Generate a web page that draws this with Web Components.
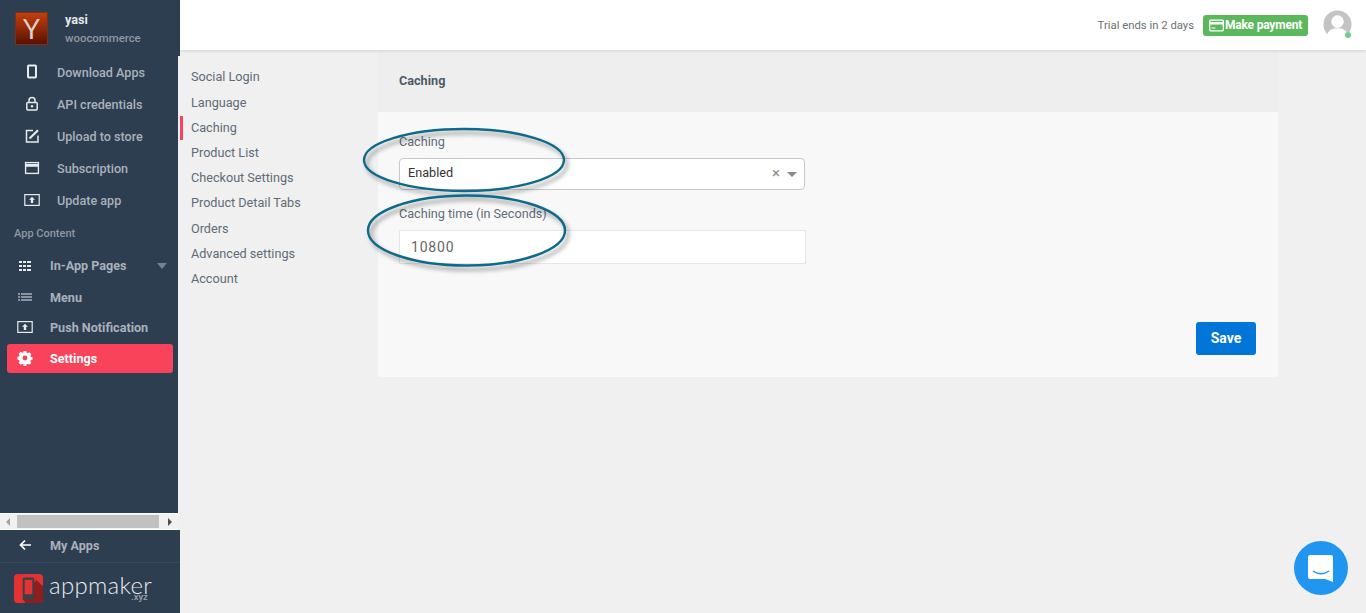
<!DOCTYPE html>
<html><head><meta charset="utf-8"><style>
html,body{margin:0;height:100%;overflow:hidden;background:#f0f0f0}
body{font-family:Roboto,"Liberation Sans",sans-serif}
</style></head><body>
<app-shell>
  <side-bar slot="side"></side-bar>
  <top-bar slot="top"></top-bar>
  <sub-nav slot="nav"></sub-nav>
  <cache-panel slot="main"></cache-panel>
</app-shell>
<chat-bubble></chat-bubble>
<script>
const def=(n,html)=>customElements.define(n,class extends HTMLElement{constructor(){super();this.attachShadow({mode:'open'}).innerHTML=html}});
def('app-shell',`<style>:host{display:grid;grid-template-columns:180px 1fr;grid-template-rows:50px 1fr;height:613px;width:1366px}
.s{grid-row:1/3}.b{display:flex;min-height:0}</style>
<div class="s"><slot name="side"></slot></div><slot name="top"></slot><div class="b"><slot name="nav"></slot><slot name="main"></slot></div>`);
const ic={
phone:'<rect x="5" y="2.500" width="8" height="12" rx=".8" fill="none" stroke="#e8eaec" stroke-width="2"/>',
lock:'<path d="M6 7.500V5.500a3 3 0 016 0v2" fill="none" stroke="#e8eaec" stroke-width="1.500"/><rect x="3.800" y="7.500" width="10.400" height="7.500" rx="1" fill="none" stroke="#e8eaec" stroke-width="1.500"/><circle cx="9" cy="11.200" r="1.200" fill="#e8eaec"/>',
edit:'<path d="M10 3.500H3.500v11.500h11.500V8.500" fill="none" stroke="#e8eaec" stroke-width="1.500"/><path d="M6.500 11.500L15 3.200" stroke="#e8eaec" stroke-width="2.200"/>',
card:'<rect x="2.600" y="3.600" width="12.800" height="10.800" fill="none" stroke="#e8eaec" stroke-width="1.400"/><rect x="3" y="5" width="12" height="2.800" fill="#e8eaec"/>',
up:'<rect x="1.800" y="3.600" width="14.400" height="10.800" fill="none" stroke="#e8eaec" stroke-width="1.200"/><path d="M9 5.800l3 3h-1.800V12H7.800V8.800H6z" fill="#e8eaec"/>',
grid:'<g fill="#e8eaec"><rect x="3" y="4" width="3" height="2"/><rect x="7" y="4" width="3" height="2"/><rect x="11" y="4" width="4" height="2"/><rect x="3" y="8" width="3" height="2"/><rect x="7" y="8" width="3" height="2"/><rect x="11" y="8" width="4" height="2"/><rect x="3" y="12" width="3" height="2"/><rect x="7" y="12" width="3" height="2"/><rect x="11" y="12" width="4" height="2"/></g>',
menu:'<path d="M2 6h2M5 6h11M2 9h2M5 9h11M2 12h2M5 12h11" stroke="#e8eaec" stroke-width="1.200" fill="none"/>',
gear:'<path fill="#fff" d="M7.600 2h2.800l.3 1.700 1.200.5 1.500-1 2 2-1 1.500.5 1.200 1.700.3v2.600l-1.700.3-.5 1.200 1 1.500-2 2-1.500-1-1.200.5-.3 1.700H7.600l-.3-1.700-1.200-.5-1.500 1-2-2 1-1.500-.5-1.200-1.700-.3V7.700l1.700-.3.500-1.200-1-1.500 2-2 1.500 1 1.200-.5z"/><circle cx="9" cy="9" r="2.400" fill="#f9435b"/>',
back:'<path d="M15 9H4M9 4.500L4.500 9l4.500 4.500" fill="none" stroke="#fff" stroke-width="1.700"/>'};
const svg=k=>`<svg width="18" height="18" viewBox="0 0 18 18">${ic[k]}</svg>`;
def('side-bar',`<style>
:host{display:flex;flex-direction:column;width:180px;height:613px;color:#a9b1ba;font-size:12.600px;font-weight:500}
.head{display:flex;height:56px;box-sizing:border-box;padding:12px 0 0 15px;gap:17px;background:#2d3e50}
.logo{width:33px;height:33px;background:linear-gradient(#c8400e,#561000);color:#dccfc6;font:400 27px/33px Lato,sans-serif;text-align:center;box-shadow:0 0 0 1px #7a3020 inset}
.n{font-weight:700;color:#e6e8ea;line-height:15px}.w{font-size:11.400px;color:#8f98a3;margin-top:4px;line-height:15px}
.scroll{flex:1;width:178px;display:flex;flex-direction:column;min-height:0;background:#2d3e50}
.r{display:flex;align-items:center;height:32px;padding-left:23px;gap:16px}
.r svg{flex:none}
.lab{font-size:11px;height:34px;line-height:36px;padding-left:14px;color:#8f98a3;font-weight:500}
.c{display:flex;align-items:center;height:30px;padding-left:16px;gap:16px;font-weight:700;position:relative}
.c.first{height:31px}.c.m{margin-top:1px}
.c.on{background:#f9435b;color:#fff;border-radius:3px;margin:2px 5px 0 7px;padding:0 0 1px 9px;height:29px;box-sizing:border-box}
.tri{position:absolute;left:157px;top:13px;border:5px solid transparent;border-top:6px solid #778391;border-bottom:0}
.sp{flex:1}
.bar{height:17px;background:#f1f1f1;display:flex;align-items:center;justify-content:space-between;padding:0 6px;box-sizing:border-box;position:relative;width:178px;border-top:1px solid #fff;border-bottom:1px solid #fff}
.bar i{width:0;height:0;border:4px solid transparent}
.bar .l{border-right:4px solid #a3a3a3;border-left:0}.bar .rr{border-left:4px solid #505050;border-right:0}
.thumb{position:absolute;left:17px;right:19px;top:1px;bottom:1px;background:#c1c1c1}
.my{display:flex;align-items:center;height:33px;padding:0 0 2px 16px;box-sizing:border-box;gap:16px;font-weight:700;border-bottom:1px solid #37475a;background:#2d3e50}
.brand{height:50px;display:flex;padding:11px 0 0 14px;gap:6px;box-sizing:border-box;position:relative;background:#2d3e50}
.word{font:300 24px/20px Lato,Roboto,sans-serif;color:#e8eaec;letter-spacing:.3px;height:20px;margin-top:1px}
.xyz{position:absolute;left:131px;top:29px;font-size:9.500px;line-height:10px;color:#9aa3ac}
</style>
<div class="head"><div class="logo">Y</div><div><div class="n">yasi</div><div class="w">woocommerce</div></div></div>
<div class="scroll">
<div class="r">${svg('phone')}<span>Download Apps</span></div>
<div class="r">${svg('lock')}<span>API credentials</span></div>
<div class="r">${svg('edit')}<span>Upload to store</span></div>
<div class="r">${svg('card')}<span>Subscription</span></div>
<div class="r">${svg('up')}<span>Update app</span></div>
<div class="lab">App Content</div>
<div class="c first">${svg('grid')}<span>In-App Pages</span><i class="tri"></i></div>
<div class="c m">${svg('menu')}<span>Menu</span></div>
<div class="c">${svg('up')}<span>Push Notification</span></div>
<div class="c on">${svg('gear')}<span>Settings</span></div>
<div class="sp"></div>
<div class="bar"><i class="l"></i><div class="thumb"></div><i class="rr"></i></div>
</div>
<div class="my">${svg('back')}<span>My Apps</span></div>
<div class="brand"><svg width="29" height="29" viewBox="0 0 30 30"><rect width="30" height="30" rx="4" fill="#e23232"/><path d="M23 6l7 7v13a4 4 0 01-4 4H12L9 26z" fill="#8e1f1f"/><rect x="9" y="3.500" width="12" height="23" rx="2" fill="#3a3f4a"/><rect x="11" y="6" width="8" height="15" fill="#e23232"/></svg><span class="word">appmaker</span><span class="xyz">.xyz</span></div>`);
def('top-bar',`<style>:host{display:flex;align-items:center;justify-content:flex-end;height:50px;background:#fff;box-shadow:0 1px 3px rgba(0,0,0,.12);position:relative;z-index:2;padding-right:14px;box-sizing:border-box;color:#6c6f75;font-size:11.300px}
.t{margin-right:9px}
.b{display:inline-flex;align-items:center;gap:1px;height:21px;background:#5cb85c;border-radius:3px;color:#fff;font-weight:700;font-size:12px;letter-spacing:-.2px;padding:0 0 0 6px;margin-right:15px;box-sizing:border-box;width:105px;white-space:nowrap}
.av{position:relative;width:29px;height:29px;margin-bottom:2px}
.d{position:absolute;right:1px;bottom:1px;width:6px;height:6px;border-radius:50%;background:#6fce8f}
</style><span class="t">Trial ends in 2 days</span>
<span class="b"><svg width="15" height="15" viewBox="0 0 15 15"><rect x=".7" y="2.200" width="13.600" height="10.600" rx="1" fill="none" stroke="#fff" stroke-width="1.300"/><rect x="1" y="4" width="13" height="2.500" fill="#fff"/><rect x="2.500" y="9.500" width="4" height="1" fill="#fff"/></svg>Make payment</span>
<span class="av"><svg width="29" height="29" viewBox="0 0 30 30"><circle cx="15" cy="15" r="14.500" fill="#c3c3c3"/><circle cx="15" cy="12" r="6.500" fill="#fff"/><path d="M4 26c2-6 7-7 11-7s9 1 11 7a14.500 14.500 0 01-22 0z" fill="#fff"/></svg><i class="d"></i></span>`);
def('sub-nav',`<style>:host{display:flex;flex-direction:column;width:198px;flex:none;padding-top:14.400px;box-sizing:border-box;color:#5f6b77;font-size:12.650px}
div{height:25.250px;line-height:25px;padding-left:11px;box-sizing:border-box}
.on{border-left:3px solid #f9435b;padding-left:8px;height:24px;line-height:24px;margin:1px 0 0}
</style><div>Social Login</div><div>Language</div><div class="on">Caching</div><div>Product List</div><div>Checkout Settings</div><div>Product Detail Tabs</div><div>Orders</div><div>Advanced settings</div><div>Account</div>`);
def('cache-panel',`<style>:host{display:block;width:900px;flex:none;position:relative;color:#5f6b77;font-size:12.650px}
.h{height:62px;background:#eeeeee;padding:22px 0 0 21px;box-sizing:border-box;font-weight:700;color:#4e5a66;line-height:17px}
.b{height:265px;background:#f8f8f8;box-sizing:border-box;padding:21px 21px 0;position:relative}
label{display:block;line-height:17px}
.sel{margin-top:8px;width:406px;height:32px;background:#fff;border:1px solid #c8c8c8;border-radius:4px;box-sizing:border-box;display:flex;align-items:center;padding:0 8px 3px;color:#333;margin-bottom:15px;position:relative}
.x{position:absolute;left:372px;top:6px;font-size:15px;line-height:17px;color:#8d8d8d}
.arr{position:absolute;left:387px;top:13px;border:5px solid transparent;border-top:5px solid #888;border-bottom:0}
.inp{margin-top:8px;width:407px;height:34px;background:#fff;border:1px solid #e6e6e6;box-sizing:border-box;padding:0 11px;line-height:33px;font-size:14px;color:#666;letter-spacing:.8px}
.save{position:absolute;right:22px;top:210px;width:60px;height:33px;padding-bottom:1px;box-sizing:border-box;background:#0275d8;color:#fff;font-weight:700;font-size:14px;border-radius:3px;display:flex;align-items:center;justify-content:center}
svg{position:absolute;left:-20px;top:10px;overflow:visible;pointer-events:none}
</style><div class="h">Caching</div><div class="b"><label>Caching</label><div class="sel">Enabled<span class="x">×</span><i class="arr"></i></div><label>Caching time (in Seconds)</label><div class="inp">10800</div><div class="save">Save</div>
<svg width="220" height="150" viewBox="0 0 220 150" fill="none"><defs><filter id="f" x="-10%" y="-20%" width="120%" height="150%"><feDropShadow dx="3" dy="4" stdDeviation="2" flood-color="#000" flood-opacity=".4"/></filter></defs><ellipse cx="106" cy="38" rx="100" ry="31" stroke="#0f6a8a" stroke-width="2.400" filter="url(#f)"/><ellipse cx="108.500" cy="108.500" rx="98.500" ry="35" stroke="#0f6a8a" stroke-width="2.400" filter="url(#f)"/></svg></div>`);
def('chat-bubble',`<style>:host{position:fixed;left:1294px;top:541px;width:54px;height:54px;border-radius:50%;background:#2196f0;display:flex;align-items:center;justify-content:center}</style><svg width="28" height="28" viewBox="0 0 28 28"><path d="M3 1h21a2 2 0 012 2v25l-8-3H3a2 2 0 01-2-2V3a2 2 0 012-2z" fill="#fff"/><path d="M6 17c5 3.500 11 3.500 16 0" stroke="#2196f0" stroke-width="1.500" fill="none"/></svg>`);
</script></body></html>
